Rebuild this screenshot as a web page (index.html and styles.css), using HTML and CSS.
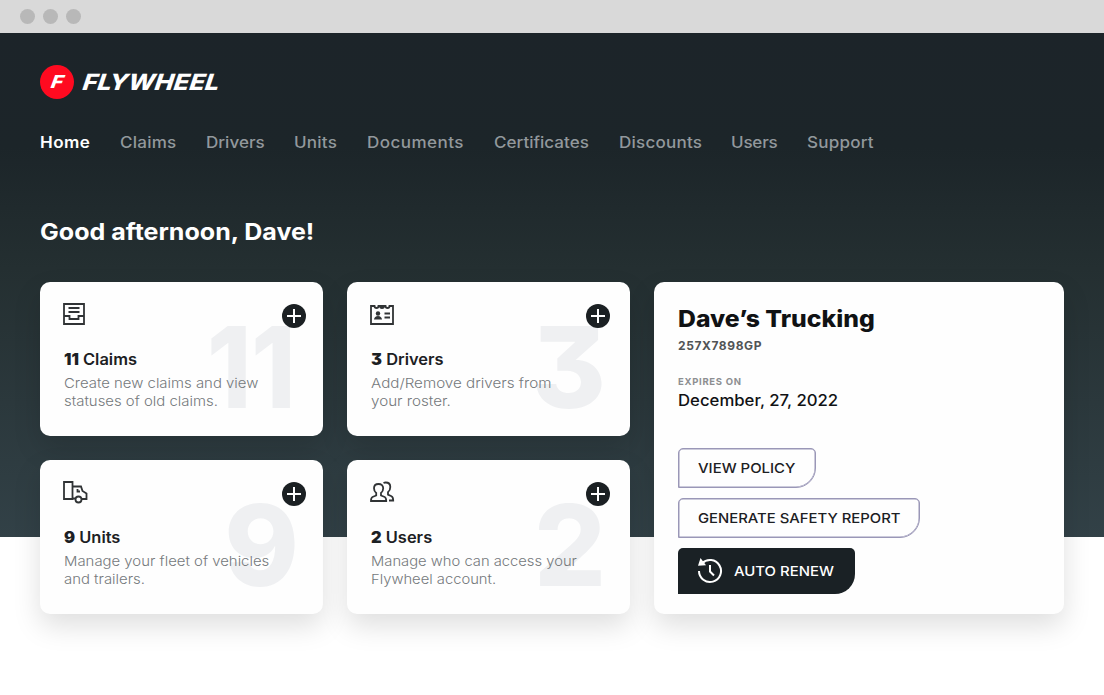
FILE: index.html
```html
<!DOCTYPE html>
<html lang="en">
<head>
<meta charset="utf-8">
<title>Flywheel</title>
<link rel="stylesheet" href="styles.css">
</head>
<body>
<div class="chrome"><i></i><i></i><i></i></div>
<main class="page">
  <header class="brand"><span class="mark"><b>F</b></span><span class="wordmark">FLYWHEEL</span></header>
  <nav class="nav">
    <a class="active"><span>Home</span></a><a><span>Claims</span></a><a><span class="tight">Drivers</span></a><a><span>Units</span></a><a><span>Documents</span></a><a><span class="tight">Certificates</span></a><a><span>Discounts</span></a><a><span class="tight">Users</span></a><a><span>Support</span></a>
  </nav>
  <h1>Good afternoon, Dave!</h1>
  <div class="dashboard">
    <section class="tiles">
      <article class="card tile">
        <span class="count eleven">11</span>
        <svg class="icon" viewBox="0 0 26 26"><path d="M2 2h20v20H2zM2 14h5.500v3h9v-3H22M6.500 6h11M6.500 10h11"/></svg>
        <span class="add"></span>
        <h2><b>11</b> Claims</h2>
        <p>Create new claims and view<br>statuses of old claims.</p>
      </article>
      <article class="card tile">
        <span class="count three">3</span>
        <svg class="icon" viewBox="0 0 26 26"><path d="M2 4h3.500q0 2 2 2t2-2h7q0 2 2 2t2-2H24v18H2zM9.500 4h1.500q0 2 2 2t2-2h1.500M15.500 11.500H21M15.500 15.500H21"/><circle class="solid" cx="9" cy="11.500" r="2.200"/><path class="solid" d="M5 17.500q.5-3.500 4-3.500t4 3.500z"/><path class="notch" d="M10 4h1M15 4h1"/></svg>
        <span class="add"></span>
        <h2><b>3</b> Drivers</h2>
        <p class="wide">Add/Remove drivers from<br>your roster.</p>
      </article>
      <article class="card tile">
        <span class="count nine">9</span>
        <svg class="icon" viewBox="0 0 26 26"><path d="M2 2h8.500v17H2zM10.500 6.500h8.500l1.500 4.500 4 2.500v5.500h-4.500M10.500 18.500h3M15.500 9v2.500h2.500"/><circle cx="16.500" cy="19.500" r="3"/></svg>
        <span class="add"></span>
        <h2><b>9</b> Units</h2>
        <p>Manage your fleet of vehicles<br>and trailers.</p>
      </article>
      <article class="card tile">
        <span class="count two">2</span>
        <svg class="icon" viewBox="0 0 26 26"><path d="M9.500 4C6.500 4 5 5.800 5 8.300c0 2 .7 3.500 2.200 4.700v2.500L3.500 17Q2 17.700 2 21h15.200q0-3.300-1.500-4L12 15.500V13c1.500-1.200 2.200-2.700 2.200-4.700C14.200 5.800 12.500 4 9.500 4zM14.500 3q1-.5 2.200-.5c3 0 4.600 1.800 4.600 4.400 0 2.300-.8 4-2.300 5.200v2.600l3.500 1.500q1.700.8 1.700 4.300h-4.200"/></svg>
        <span class="add"></span>
        <h2><b>2</b> Users</h2>
        <p class="narrow">Manage who can access your<br>Flywheel account.</p>
      </article>
    </section>
    <section class="card policy">
      <h3>Dave’s Trucking</h3>
      <div class="number">257X7898GP</div>
      <div class="label">EXPIRES ON</div>
      <div class="date">December, 27, 2022</div>
      <a class="button view"><span>VIEW POLICY</span></a>
      <a class="button report"><span>GENERATE SAFETY REPORT</span></a>
      <a class="button renew"><svg viewBox="0 0 26 26"><path d="M5 5.500A11 11 0 1 1 2 13M13 7v6.500l4 4"/><path class="arrow" d="M3.500 0L1 7.800l8-.6z"/></svg><span>AUTO RENEW</span></a>
    </section>
  </div>
</main>
</body>
</html>
```
FILE: styles.css
```css
* { box-sizing: border-box; }
body { margin: 0; background: #fff; color: #1c2023; font-family: Inter, "Open Sans", sans-serif; font-feature-settings: "cv09"; }
h1, h2, h3, p { margin: 0; }
.chrome { display: flex; gap: 8px; height: 33px; padding: 9px 20px; background: #d9d9d9; }
.chrome i { width: 15px; height: 15px; border-radius: 50%; background: #b8b8b8; }
.page { height: 662px; padding: 32px 40px 0; background: linear-gradient(#1c2429 0, #1c2529 115px, #242f31 235px, #324147 504px) no-repeat 0 0 / 100% 504px; }
.brand { display: flex; align-items: center; gap: 8px; height: 34px; color: #fff; }
.mark { display: grid; place-items: center; width: 34px; height: 34px; border-radius: 50%; background: #ff0a20; }
.mark b { font-size: 18px; font-style: italic; font-weight: 800; line-height: 1; transform: skewX(-10deg) scaleX(1.15); }
.wordmark { margin-left: 1px; font-size: 22.500px; font-style: italic; font-weight: 800; line-height: 34px; transform: skewX(-8deg) scaleX(1.125); transform-origin: left; }
.nav { display: grid; grid-template-columns: 80px 86px 88px 73px 127px 125px 112px 76px 70px; margin-top: 32px; color: #92989c; font-size: 15.500px; font-weight: 500; line-height: 24px; white-space: nowrap; }
.nav span { display: inline-block; letter-spacing: .2px; transform: scaleX(1.1); transform-origin: left; }
.nav .tight { letter-spacing: 0; }
.nav a:nth-child(8) span { letter-spacing: -.2px; }
.nav a:nth-child(5) span { letter-spacing: .4px; }
.nav .active { color: #fff; font-weight: 600; }
.nav .active span { letter-spacing: .4px; }
h1 { width: max-content; margin-top: 61px; color: #fff; font-size: 23px; font-weight: 700; line-height: 32px; transform: scaleX(1.088); transform-origin: left; }
.dashboard { display: grid; grid-template-columns: 590px 410px; gap: 24px; margin-top: 34px; }
.tiles { display: grid; grid-template: 154px 154px / 283px 283px; gap: 24px; }
.card { background: #fefefe; border-radius: 10px; box-shadow: 0 12px 28px rgba(0, 0, 0, .13); }
.tile { position: relative; padding: 20px 24px 0; }
.icon { position: relative; display: block; width: 26px; height: 26px; margin-left: -2px; fill: none; stroke: #303335; stroke-width: 1.800; }
.icon .solid { fill: #303335; stroke: none; }
.icon .notch { stroke-width: 2; }
.add { position: absolute; top: 22px; right: 17px; width: 24px; height: 24px; border-radius: 50%; background: linear-gradient(#fff, #fff) center / 14px 2px no-repeat, linear-gradient(#fff, #fff) center / 2px 14px no-repeat, #1b2023; }
.tile:nth-child(even) .add { right: 20px; }
.tile h2, .tile p { position: relative; width: max-content; transform-origin: left; white-space: nowrap; }
.tile h2 { margin-top: 21px; font-size: 15.500px; font-weight: 600; line-height: 22px; transform: scaleX(1.06); }
.tile h2 b { font-weight: 900; }
.tile p { margin-top: 3px; color: #75797c; font-size: 13.500px; font-weight: 300; line-height: 18px; transform: scaleX(1.104); }
.tile .wide { transform: scaleX(1.124); }
.tile .narrow { transform: scaleX(1.093); }
.count { position: absolute; top: 28px; right: 24px; color: #eff0f2; font-size: 113px; font-weight: 800; line-height: 114px; transform-origin: right; }
.eleven { right: 27px; transform: scaleX(.89); }
.policy { display: flex; flex-direction: column; align-items: flex-start; padding: 22px 24px 0; }
.policy > div, .policy h3 { transform-origin: left; white-space: nowrap; }
.policy h3 { color: #101214; font-size: 22.500px; font-weight: 800; line-height: 30px; transform: scaleX(1.1); }
.number { margin-top: 4px; color: #515456; font-size: 12px; font-weight: 700; line-height: 16px; letter-spacing: .600px; }
.label { margin-top: 21px; color: #8d8f91; font-size: 9.500px; font-weight: 700; line-height: 14px; letter-spacing: .700px; }
.date { margin-top: 1px; color: #101214; font-size: 15.500px; font-weight: 500; line-height: 22px; transform: scaleX(1.08); }
.button { display: flex; align-items: center; height: 40px; margin-top: 10px; padding-left: 19px; border: 1px solid #9a97b7; box-shadow: inset 0 0 0 .5px #9a97b7; border-radius: 5px 5px 20px 0; font-size: 13.500px; font-weight: 500; white-space: nowrap; }
.button span { display: inline-block; transform-origin: left; transform: scaleX(1.105); }
.view { width: 138px; margin-top: 36px; }
.report { width: 242px; }
.report span { transform: scaleX(1.1); }
.renew { width: 177px; height: 46px; border: 0; background: #1a2125; box-shadow: none; color: #fff; }
.renew svg { width: 26px; height: 26px; margin-right: 11px; fill: none; stroke: #fff; stroke-width: 2; }
.renew .arrow { fill: #fff; stroke: none; }
```
